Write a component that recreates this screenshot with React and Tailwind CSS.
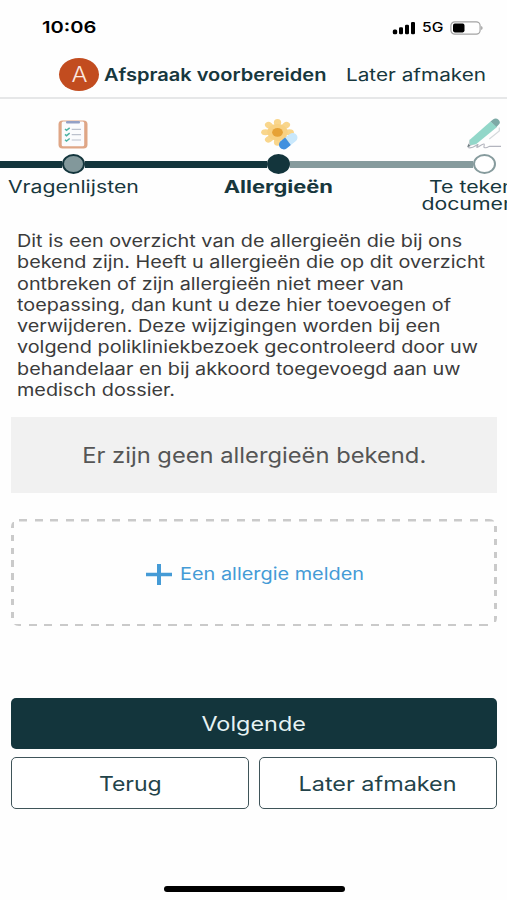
// Clipboard, flower with pill and pen are small custom drawings, one per step.
function ClipboardIcon() {
  return (
    <svg width="30" height="29" viewBox="0 0 30 29" fill="none">
      <rect x="0.5" y="0.5" width="29" height="28" rx="4" fill="#dfa686" />
      <rect x="3.7" y="1.6" width="22.5" height="24.6" rx="1.5" fill="#fbfbfd" />
      <rect x="8" y="1" width="14" height="2.4" rx="1" fill="#93a0c6" />
      <path d="M7 9l1.500 1.300 3.200-2.500M7 14.400l1.500 1.300 3.200-2.500M7 19.700l1.500 1.300 3.200-2.500" stroke="#4fb3a3" strokeWidth="1.5" />
      <path d="M13.700 9.300h9.300M13.700 14.700h9.300M13.700 20h9.300" stroke="#bcc1cd" strokeWidth="1.2" />
    </svg>
  );
}

const PETALS = [0, 45, 90, 135, 180, 225, 270, 315];

function AllergyIcon() {
  return (
    <svg width="38" height="32" viewBox="0 0 38 32">
      <g transform="translate(17.500 14.300) scale(1.220 1)">
        {PETALS.map((angle) => (
          <ellipse key={angle} cx="0" cy="-9.8" rx="3" ry="3.6" fill="#f9d68c" transform={`rotate(${angle})`} />
        ))}
        <circle r="8.4" fill="#f8d182" />
        <circle r="4.4" fill="#e6a236" />
      </g>
      <g transform="translate(28 23.300) rotate(-38)">
        <path d="M0-4.700h6a4.700 4.700 0 0 1 0 9.400H0z" fill="#c9e8fc" />
        <path d="M0-4.700h-5.500a4.700 4.700 0 0 0 0 9.400H0z" fill="#4190df" />
      </g>
    </svg>
  );
}

function PenIcon() {
  return (
    <svg width="36" height="32" viewBox="0 0 36 32" fill="none">
      <path d="M2 29.500c4 1.600 7-1.500 9.500-3 2-.5-2.500 3.500 0 2.800 2-.8 5-3.800 6.500-3.300 1.200.8-1.500 3.700 1 3.700 3.500.4 3-1.700 5-1.300h11" stroke="#b3b5be" strokeWidth="1.1" />
      <path d="M33.300 9.500v3.500l-10 8" stroke="#d5d9dc" strokeWidth="1.2" />
      <path d="M1.500 29l2.300-7.500 5.500 4.500z" fill="#c9cdd0" />
      <path d="M3.500 22L24.500 3.500l6.500 5.500L10 26.300l-6 .7z" fill="#92d7c9" />
      <path d="M24.500 3.500l2.500-2c2-1.400 4-1 5.500.3 1.700 1.500 1.900 3.400.3 4.800L30.500 9z" fill="#7daaa6" />
      <path d="M1.300 29.300l.9-3.200 2.300 2z" fill="#6d7b80" />
    </svg>
  );
}

function SignalIcon() {
  return (
    <svg width="24" height="14" viewBox="0 0 24 14">
      <rect x="0.8" y="8.5" width="4.4" height="4.7" rx="1.5" />
      <rect x="7" y="6.3" width="4" height="6.9" rx="1.2" />
      <rect x="13" y="3.7" width="4" height="9.5" rx="1.2" />
      <rect x="19" y="0.9" width="4" height="12.3" rx="1.2" />
    </svg>
  );
}

function BatteryIcon() {
  return (
    <svg width="34" height="14" viewBox="0 0 34 14">
      <rect x="0.9" y="0.9" width="29.2" height="12.2" rx="3.8" fill="none" stroke="#a3a3a3" strokeWidth="1.2" />
      <rect x="3" y="2.6" width="11.5" height="8.8" rx="1.8" />
      <path d="M31.300 5c1.600.6 1.600 3.400 0 4z" fill="#8a8a8a" />
    </svg>
  );
}

function StatusBar() {
  return (
    <div className="flex h-[54px] items-center pl-[42px] pr-[23px] pt-px text-black">
      <span className="origin-left scale-x-[1.22] text-[16.5px] font-semibold">10:06</span>
      <div className="ml-auto flex items-center">
        <SignalIcon />
        <span className="ml-[6px] w-[28px] origin-left scale-x-[1.2] pt-px text-[13px] font-medium">5G</span>
        <BatteryIcon />
      </div>
    </div>
  );
}

function Header() {
  return (
    <header className="flex h-[45px] items-center border-b-2 border-[#e6e7e8] pb-[3px] pl-[59px] text-[17px] text-[#17373d]">
      <div className="flex h-[33px] w-[40px] shrink-0 items-center justify-center rounded-[50%] bg-[#c24c1f] text-[22px] text-[#fbe9e1]">
        <span className="scale-x-[1.08] font-light">A</span>
      </div>
      <span className="ml-[5px] w-[242px] origin-left scale-x-[1.18] whitespace-nowrap pt-[3px] font-semibold">Afspraak voorbereiden</span>
      <span className="origin-left scale-x-[1.22] whitespace-nowrap pt-[3px]">Later afmaken</span>
    </header>
  );
}

const STEPS = [
  {
    label: ['Vragenlijsten'],
    icon: <ClipboardIcon />,
    before: 'bg-[#13353c]',
    after: 'bg-[#13353c]',
    dot: 'border-2 border-[#13353c] bg-[#82989b]',
    text: 'scale-x-[1.25]',
  },
  {
    label: ['Allergieën'],
    icon: <AllergyIcon />,
    before: 'bg-[#13353c]',
    after: 'bg-[#869b9d]',
    dot: 'bg-[#13353c]',
    text: 'scale-x-[1.29] font-bold',
  },
  {
    label: ['Te tekenen', 'documenten'],
    icon: <PenIcon />,
    before: 'bg-[#869b9d]',
    after: 'bg-transparent',
    dot: 'border-2 border-[#869b9d] bg-white',
    text: 'scale-x-[1.25]',
  },
];

// The last step runs off the right edge of the screen.
function Stepper() {
  return (
    <div className="-ml-[29.5px] flex h-[132px] pt-[18px]">
      {STEPS.map((step) => (
        <div key={step.label[0]} className="flex w-[205.5px] shrink-0 flex-col items-center">
          <div className="flex h-[34px] items-center">{step.icon}</div>
          <div className="mt-[3px] flex h-[20px] w-full items-center">
            <div className={`h-[7px] flex-1 ${step.before}`} />
            <div className={`h-[20px] w-[23px] rounded-[50%] ${step.dot}`} />
            <div className={`h-[7px] flex-1 ${step.after}`} />
          </div>
          <div className={`mt-[5px] text-center text-[17px] leading-[17px] text-[#17373d] ${step.text}`}>
            {step.label.map((line) => (
              <div key={line}>{line}</div>
            ))}
          </div>
        </div>
      ))}
    </div>
  );
}

// Line breaks are fixed so the paragraph never reflows.
const INTRO = [
  'Dit is een overzicht van de allergieën die bij ons',
  'bekend zijn. Heeft u allergieën die op dit overzicht',
  'ontbreken of zijn allergieën niet meer van',
  'toepassing, dan kunt u deze hier toevoegen of',
  'verwijderen. Deze wijzigingen worden bij een',
  'volgend polikliniekbezoek gecontroleerd door uw',
  'behandelaar en bij akkoord toegevoegd aan uw',
  'medisch dossier.',
];

export default function App() {
  return (
    <div className="flex h-[900px] w-[507px] flex-col overflow-hidden bg-[#fefefe] font-['Inter',sans-serif]">
      <StatusBar />
      <Header />
      <Stepper />

      <main className="flex flex-col pl-[11px] pr-[10px]">
        <p className="ml-[5.5px] w-[410px] origin-left scale-x-[1.165] whitespace-nowrap text-[17px] leading-[21.3px] text-[#3b3b3b]">
          {INTRO.map((line) => (
            <span key={line} className="block">{line}</span>
          ))}
        </p>

        <div className="mt-[16px] flex h-[76px] items-center justify-center bg-[#f1f1f1] text-[21px] text-[#555]">
          <span className="scale-x-[1.13]">Er zijn geen allergieën bekend.</span>
        </div>

        {/* Dashed outline: one repeating gradient per side (top, bottom, left, right) */}
        <button className="mt-[26px] flex h-[107px] items-center justify-center rounded-[8px] pt-[3px] text-[#459bd6] [background:repeating-linear-gradient(90deg,#cacaca_0_8px,transparent_8px_15.55px)_8px_0/100%_2.5px_no-repeat,repeating-linear-gradient(90deg,#cacaca_0_8px,transparent_8px_15.55px)_2px_100%/100%_2.5px_no-repeat,repeating-linear-gradient(180deg,#cacaca_0_6.5px,transparent_6.5px_12.8px)_0_3px/3px_100%_no-repeat,repeating-linear-gradient(180deg,#cacaca_0_6.5px,transparent_6.5px_12.8px)_100%_7px/3px_100%_no-repeat]">
          <svg width="26" height="21" viewBox="0 0 26 21" fill="currentColor">
            <path d="M11 0h4v8.700h11v3.500H15V21h-4v-8.800H0V8.700h11z" />
          </svg>
          <span className="ml-[8px] w-[182px] origin-left scale-x-[1.17] pt-px text-left text-[17px]">Een allergie melden</span>
        </button>

        <button className="mt-[72px] flex h-[51px] items-center justify-center rounded-[5px] bg-[#13353c] pt-px text-[20px] text-[#e6f2f3]">
          <span className="scale-x-[1.17]">Volgende</span>
        </button>
        <div className="mt-[8px] grid grid-cols-2 gap-[10px] text-[20px] text-[#23434a]">
          <button className="flex h-[52px] items-center justify-center rounded-[5px] border border-[#3f5459] bg-white pt-[2px]">
            <span className="scale-x-[1.15]">Terug</span>
          </button>
          <button className="flex h-[52px] items-center justify-center rounded-[5px] border border-[#3f5459] bg-white pt-[2px]">
            <span className="scale-x-[1.17]">Later afmaken</span>
          </button>
        </div>
      </main>

      <div className="ml-[164px] mb-[8px] mt-auto h-[6px] w-[181px] rounded-full bg-black" />
    </div>
  );
}
